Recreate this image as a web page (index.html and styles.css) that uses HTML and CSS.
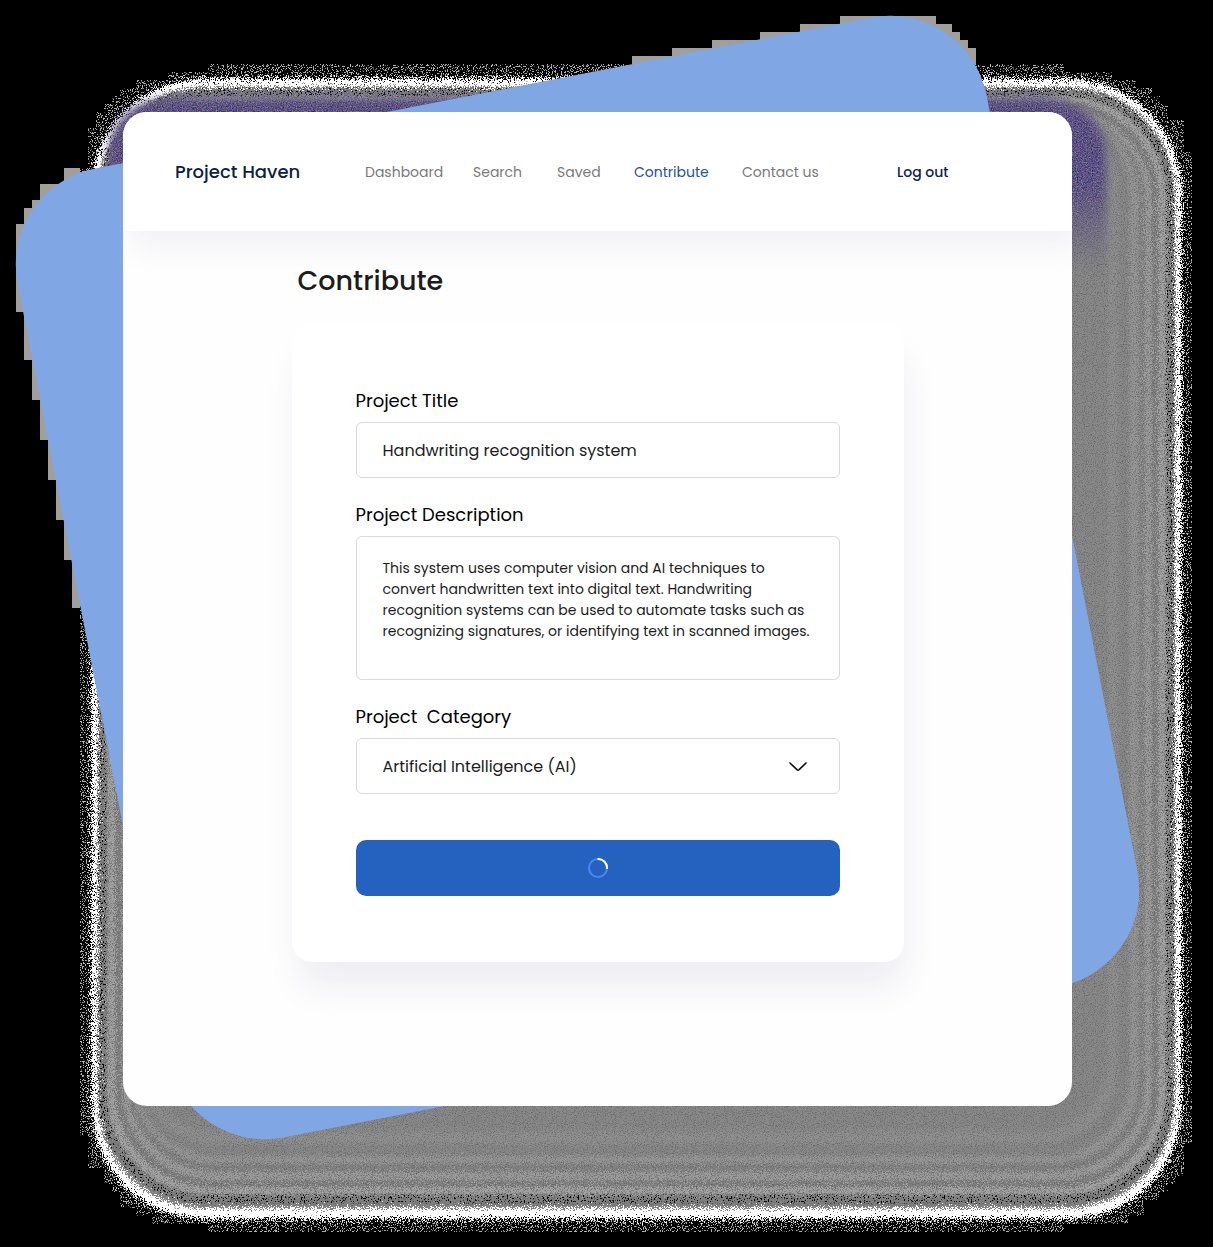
FILE: index.html
```html
<!DOCTYPE html>
<html lang="en">
<head>
<meta charset="utf-8">
<meta name="viewport" content="width=device-width, initial-scale=1">
<title>Project Haven – Contribute</title>
<link rel="stylesheet" href="styles.css">
</head>
<body>
<div class="stage">
  <svg class="backdrop" viewBox="0 0 1213 1247" preserveAspectRatio="none" aria-hidden="true">
    <defs>
      <clipPath id="halo-clip">
        <path id="halo" d="M208 64H1064V72H1112V80H1136V88H1152V96H1160V104H1168V120H1184V152H1192V1144H1184V1176H1176V1184H1168V1192H1160V1200H1144V1216H1128V1224H1064V1232H208V1224H152V1216H136V1208H120V1192H112V1184H104V1168H88V1136H80V168H88V128H96V112H104V104H112V96H120V88H136V80H168V72H208Z"/>
      </clipPath>
      <filter id="scatter" x="0" y="0" width="1213" height="1247" filterUnits="userSpaceOnUse" color-interpolation-filters="sRGB">
        <feTurbulence type="fractalNoise" baseFrequency="0.85" numOctaves="2" seed="4" result="n"/>
        <feDisplacementMap in="SourceGraphic" in2="n" scale="20" xChannelSelector="R" yChannelSelector="G"/>
      </filter>
      <filter id="specks" x="0" y="0" width="1213" height="1247" filterUnits="userSpaceOnUse" color-interpolation-filters="sRGB">
        <feTurbulence type="fractalNoise" baseFrequency="0.8" numOctaves="2" seed="9"/>
        <feColorMatrix values="0 0 0 0 0.7  0 0 0 0 0.7  0 0 0 0 0.7  24 0 0 0 -13.6" result="s"/>
        <feComposite in="s" in2="SourceAlpha" operator="in"/>
      </filter>
      <filter id="dark-specks" x="0" y="0" width="1213" height="1247" filterUnits="userSpaceOnUse" color-interpolation-filters="sRGB">
        <feTurbulence type="fractalNoise" baseFrequency="0.7" numOctaves="2" seed="12"/>
        <feColorMatrix values="0 0 0 0 0  0 0 0 0 0  0 0 0 0 0  24 0 0 0 -14.6" result="s"/>
        <feComposite in="s" in2="SourceAlpha" operator="in"/>
      </filter>
      <filter id="grain" x="0" y="0" width="1213" height="1247" filterUnits="userSpaceOnUse" color-interpolation-filters="sRGB">
        <feTurbulence type="fractalNoise" baseFrequency="0.9" numOctaves="2" seed="2"/>
        <feColorMatrix values="0 0 0 0 0  0 0 0 0 0  0 0 0 0 0  0.7 0 0 0 -0.32" result="g"/>
        <feComposite in="g" in2="SourceAlpha" operator="in"/>
      </filter>
      <filter id="colour-grain" x="0" y="0" width="1213" height="1247" filterUnits="userSpaceOnUse" color-interpolation-filters="sRGB">
        <feGaussianBlur in="SourceGraphic" stdDeviation="5" result="b"/>
        <feTurbulence type="fractalNoise" baseFrequency="0.8" numOctaves="2" seed="6"/>
        <feColorMatrix values="0.7 0 0 0 0.01  0.5 0.3 0 0 -0.08  0.4 0 0.5 0 0.06  0 0 0 0 1" result="c"/>
        <feComposite in="c" in2="b" operator="in"/>
      </filter>
      <linearGradient id="fade" x1="0" y1="180" x2="0" y2="270" gradientUnits="userSpaceOnUse">
        <stop offset="0" stop-color="#000"/>
        <stop offset="1" stop-color="#000" stop-opacity="0"/>
      </linearGradient>
    </defs>
    <rect width="1213" height="1247" fill="#000"/>
    <g clip-path="url(#halo-clip)">
      <use href="#halo" filter="url(#specks)"/>
      <g filter="url(#scatter)">
        <rect x="92" y="79" width="1089" height="1140" rx="112" fill="#fff"/>
        <rect x="98" y="87" width="1077" height="1121" rx="106" fill="#838383"/>
        <rect x="108" y="96" width="1058" height="1098" rx="100" fill="#a4a4a4"/>
        <rect x="115" y="102" width="1044" height="1085" rx="96" fill="#828282"/>
        <rect x="122" y="108" width="1030" height="1072" rx="92" fill="#9c9c9c"/>
        <rect x="128" y="112" width="1017" height="1060" rx="88" fill="#848484"/>
        <rect x="132" y="112" width="1007" height="1052" rx="84" fill="#969696"/>
        <rect x="136" y="112" width="994" height="1044" rx="80" fill="#888888"/>
        <rect x="140" y="112" width="978" height="1032" rx="76" fill="#909090"/>
        <rect x="144" y="112" width="964" height="1020" rx="72" fill="#898989"/>
      </g>
      <rect x="102" y="92" width="1068" height="1107" rx="104" fill="none" stroke="#000" stroke-width="9" filter="url(#dark-specks)"/>
      <rect x="100" y="90" width="1074" height="1116" rx="106" filter="url(#grain)"/>
      <path d="M108 190V155Q112 99 175 98H1040Q1106 102 1106 160V270H1060V122H180Q130 122 130 190Z" fill="url(#fade)" filter="url(#colour-grain)"/>
    </g>
    <path fill="#a09f9b" shape-rendering="crispEdges" d="M16 224H24V208H32V200H40V184H64V168H80V608H72V560H64V520H56V480H48V440H40V400H32V360H24V312H16ZM632 64V56H672V48H712V40H760V32H800V24H840V16H936V24H952V32H960V40H968V48H976V64Z"/>
    <rect x="84" y="84" width="987" height="987" rx="98" fill="#80a6e4" transform="rotate(-11 577.5 577.5)"/>
  </svg>

  <div class="window">
    <header class="topbar">
      <a class="brand" href="#">Project Haven</a>
      <nav class="nav" aria-label="Main">
        <a href="#">Dashboard</a>
        <a href="#">Search</a>
        <a href="#">Saved</a>
        <a class="current" href="#" aria-current="page">Contribute</a>
        <a href="#">Contact us</a>
      </nav>
      <a class="logout" href="#">Log out</a>
    </header>
    <main class="content">
      <h1>Contribute</h1>
      <form class="card">
        <div class="field">
          <label for="title">Project Title</label>
          <input id="title" type="text" value="Handwriting recognition system">
        </div>
        <div class="field">
          <label for="description">Project Description</label>
          <textarea id="description">This system uses computer vision and AI techniques to convert handwritten text into digital text. Handwriting recognition systems can be used to automate tasks such as recognizing signatures, or identifying text in scanned images.</textarea>
        </div>
        <div class="field">
          <label for="category">Project  Category</label>
          <div class="select">
            <select id="category"><option>Artificial Intelligence (AI)</option></select>
            <svg class="chevron" width="20" height="12" viewBox="0 0 20 12" aria-hidden="true"><path d="M2 2 8.9 8.6Q10 9.6 11.1 8.6L18 2" fill="none" stroke="#111" stroke-width="1.7" stroke-linecap="round"/></svg>
          </div>
        </div>
        <button class="submit" type="submit" aria-label="Submitting">
          <svg width="20" height="20" viewBox="0 0 20 20" fill="none" stroke-width="2" aria-hidden="true"><circle cx="10" cy="10" r="9" stroke="#4c86f5"/><path d="M9.5 1A9 9 0 0 1 19 11" stroke="#fff"/></svg>
        </button>
      </form>
    </main>
  </div>
</div>
</body>
</html>
```
FILE: styles.css
```css
* { box-sizing: border-box; }

body {
  margin: 0;
  background: #000;
  color: #1c1c1c;
  font-family: Poppins, Inter, "Open Sans", sans-serif;
}

a { color: inherit; text-decoration: none; }

.stage {
  position: relative;
  min-height: 100vh;
  padding: 112px 141px 141px 123px;
}

.backdrop {
  position: absolute;
  inset: 0;
  width: 100%;
  height: 100%;
}

.window {
  position: relative;
  overflow: hidden;
  border-radius: 24px;
  background: #fefefe;
}

.topbar {
  display: grid;
  grid-template-columns: 190px 1fr 175px;
  align-items: center;
  height: 119px;
  padding-left: 52px;
  background: #fff;
  line-height: 24px;
  box-shadow: 8px 16px 32px rgba(40, 40, 110, 0.06);
}

.brand { color: #0f1f47; font-size: 18px; font-weight: 500; }

.nav {
  display: grid;
  grid-template-columns: 108px 84px 77px 108px auto;
  color: #7a7a7a;
  font-size: 14px;
}

.nav .current { color: #2450a4; }

.logout { color: #0f1f47; font-size: 14px; font-weight: 500; }

.content {
  width: 612px;
  max-width: 100%;
  margin: 0 auto;
  padding: 29px 0 144px;
}

h1 {
  margin: 0 0 22px 6px;
  font-size: 27px;
  line-height: 42px;
  font-weight: 500;
}

.card {
  display: flex;
  flex-direction: column;
  gap: 24px;
  padding: 64px 64px 66px;
  border-radius: 20px;
  background: #fff;
  box-shadow: 4px 28px 36px -4px rgba(40, 40, 110, 0.08);
}

.field { display: flex; flex-direction: column; gap: 8px; }

label {
  color: #000;
  font-size: 18px;
  line-height: 26px;
  white-space: pre;
}

input, textarea, select {
  display: block;
  width: 100%;
  height: 56px;
  margin: 0;
  padding: 0 26px;
  border: 1px solid #d9d9d9;
  border-radius: 6px;
  background: #fff;
  color: #1c1c1c;
  font-family: inherit;
  font-size: 16px;
  outline: 0;
}

textarea {
  height: 144px;
  padding: 21px 26px;
  font-size: 14px;
  line-height: 21px;
  resize: none;
}

.select { position: relative; }

select { appearance: none; }

.chevron {
  position: absolute;
  top: 23px;
  right: 32px;
  pointer-events: none;
}

.submit {
  display: flex;
  align-items: center;
  justify-content: center;
  height: 56px;
  margin-top: 22px;
  padding: 0;
  border: 0;
  border-radius: 10px;
  background: #2562c0;
}
```
